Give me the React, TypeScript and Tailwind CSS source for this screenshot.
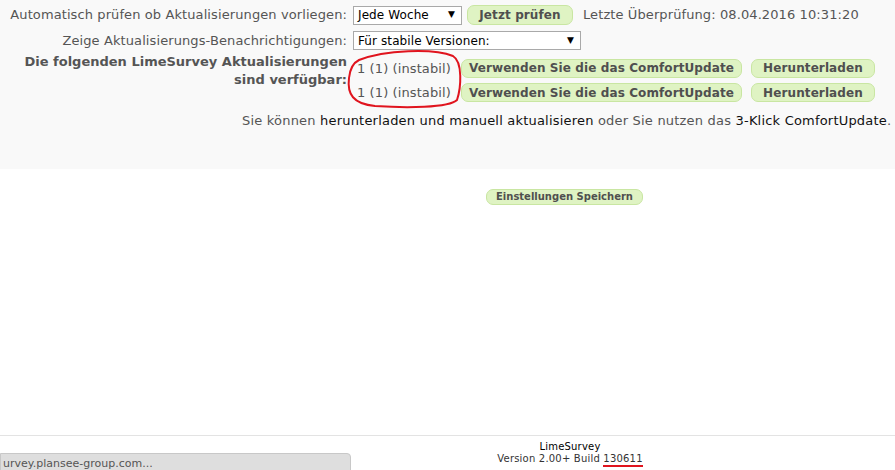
import React from 'react';

const font = { fontFamily: '"DejaVu Sans", Verdana, sans-serif' };

const Btn = ({ children, className = '' }: { children: React.ReactNode; className?: string }) => (
  <button
    className={`whitespace-nowrap rounded-[7px] border border-[#c9e6a2] bg-[#dff3c3] font-bold text-[#4f4f4f] leading-none ${className}`}
  >
    {children}
  </button>
);

const Select = ({ value, className = '' }: { value: string; className?: string }) => (
  <div
    className={`flex items-center justify-between border border-[#a9a9a9] bg-white pl-[4px] pr-[6px] text-[12px] text-black ${className}`}
  >
    <span>{value}</span>
    <span className="text-[9px]">▼</span>
  </div>
);

const updates = ['1 (1) (instabil)', '1 (1) (instabil)'];

export default function App() {
  return (
    <div
      className="relative h-[470px] w-[895px] overflow-hidden bg-white text-[13px] tracking-[0.1px] text-[#555]"
      style={font}
    >
      <div className="w-[1140px]">
        {/* settings block */}
        <div className="h-[169px] bg-[#f9f9f9] pt-[5px]">
          <div className="flex items-center">
            <div className="w-[348px] pr-[1px] text-right">Automatisch prüfen ob Aktualisierungen vorliegen:</div>
            <Select value="Jede Woche" className="ml-[5px] h-[19px] w-[109px]" />
            <Btn className="ml-[5px] h-[20px] w-[106px] text-[12px]">Jetzt prüfen</Btn>
            <span className="ml-[10px]">Letzte Überprüfung: 08.04.2016 10:31:20</span>
          </div>

          <div className="mt-[6px] flex items-center">
            <div className="w-[348px] pr-[1px] text-right">Zeige Aktualisierungs-Benachrichtigungen:</div>
            <Select value="Für stabile Versionen:" className="ml-[5px] h-[19px] w-[228px]" />
          </div>

          <div className="mt-[8px] flex">
            <div className="-mt-[6px] w-[348px] pr-[1px] text-right text-[13px] font-bold leading-[18px] tracking-normal">
              Die folgenden LimeSurvey Aktualisierungen
              <br />
              sind verfügbar:
            </div>
            <div className="ml-[9px] flex flex-col gap-[5px]">
              {updates.map((u, i) => (
                <div key={i} className="flex items-center">
                  <span className="w-[104px]">{u}</span>
                  <Btn className="h-[19px] w-[281px] text-[12px]">Verwenden Sie die das ComfortUpdate</Btn>
                  <Btn className="ml-[9px] h-[19px] w-[124px] text-[12px]">Herunterladen</Btn>
                </div>
              ))}
            </div>
          </div>

          <div className="mt-[8px] pl-[242px] tracking-[0.2px]">
            Sie können <span className="text-[#111]">herunterladen und manuell aktualisieren</span> oder Sie nutzen das{' '}
            <span className="text-[#111]">3-Klick ComfortUpdate</span>.
          </div>
        </div>

        <div className="pl-[486px] pt-[17px]">
          <Btn className="h-[16px] w-[157px] text-[10px] tracking-normal">Einstellungen Speichern</Btn>
        </div>
      </div>

      {/* red circle annotation */}
      <svg className="absolute left-[345px] top-[48px]" width="120" height="62" viewBox="0 0 120 62">
        <path
          d="M14 12 C 40 2, 88 0, 108 8 C 118 14, 116 40, 112 52 C 104 60, 60 60, 30 58 C 8 56, 2 46, 4 30 C 5 20, 8 15, 14 12 Z"
          fill="none"
          stroke="#e0141e"
          strokeWidth="2"
        />
      </svg>

      {/* footer */}
      <div className="absolute left-0 top-[435px] w-[895px] border-t border-[#e3e3e3]">
        <div className="w-[1140px] pt-[5px] text-center text-[10px] leading-[12px] tracking-[0.2px] text-[#333]">
          <div className="text-black">LimeSurvey</div>
          <div>
            Version 2.00+ Build <span className="border-b-2 border-[#e0141e] pb-[1px]">130611</span>
          </div>
        </div>
      </div>

      {/* browser status tooltip */}
      <div className="absolute left-0 top-[453px] h-[20px] w-[351px] rounded-tr-[4px] border border-[#c8c8c8] bg-[#dedede] pl-[2px] pt-[2px] text-[11px] tracking-normal text-[#555]">
        urvey.plansee-group.com...
      </div>
    </div>
  );
}
